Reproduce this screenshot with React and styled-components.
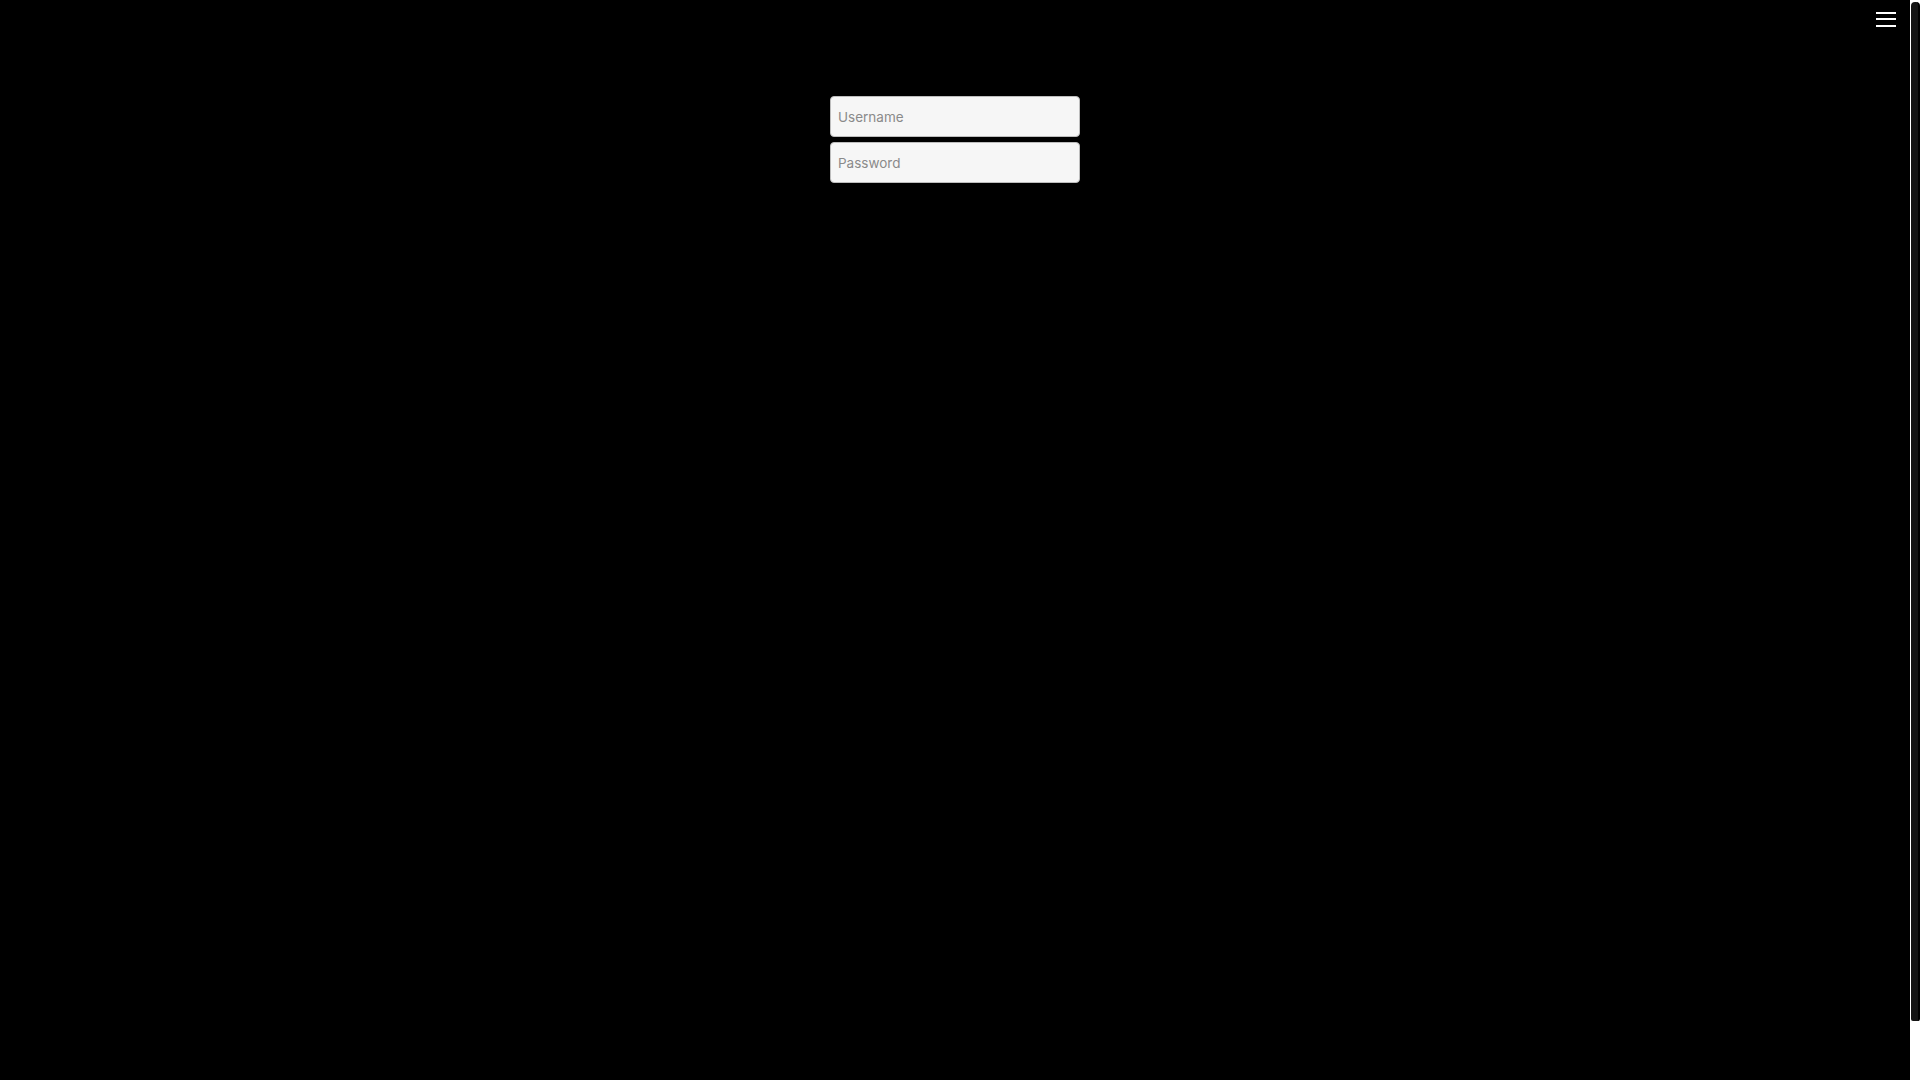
import styled, { createGlobalStyle } from "styled-components"

const Global = createGlobalStyle`
	html, body {
		margin: 0;
		background: #000;
		overflow: hidden;
	}
	body {
		font-family: Inter, "Noto Sans", sans-serif;
	}
`

const Shell = styled.div`
	display: flex;
	height: 100vh;
	background: #000;
`

const Page = styled.main`
	position: relative;
	flex: 1;
	display: flex;
	flex-direction: column;
	align-items: center;
	padding-top: 96px;
	box-sizing: border-box;
`

const Form = styled.form`
	display: flex;
	flex-direction: column;
	gap: 5px;
	width: 250px;
`

const Input = styled.input`
	box-sizing: border-box;
	height: 41px;
	width: 100%;
	padding: 0 7px;
	background: #f6f6f6;
	border: 1px solid #bdbdbd;
	border-radius: 4px;
	font-family: Inter, "Noto Sans", sans-serif;
	font-size: 13.5px;
	color: #333;
	outline: none;

	&::placeholder {
		color: #8a8a8a;
	}
`

const MenuButton = styled.button`
	position: absolute;
	top: 9px;
	right: 12px;
	width: 22px;
	height: 20px;
	padding: 0;
	background: none;
	border: none;
	cursor: pointer;
	display: flex;
	flex-direction: column;
	justify-content: center;
	gap: 4.5px;
`

const Bar = styled.span`
	display: block;
	width: 20px;
	height: 2px;
	background: #fff;
`

// drawn scrollbar, as in the capture
const ScrollTrack = styled.div`
	width: 10px;
	background: #fff;
	padding-top: 2px;
	box-sizing: border-box;
`

const ScrollThumb = styled.div`
	height: 1019px;
	margin-left: 1px;
	background: #141414;
	border-right: 2px solid #000;
	border-radius: 4px 4px 2px 2px;
`

const App = () => {
	return (
		<>
			<Global />
			<Shell>
				<Page>
					<MenuButton aria-label="Menu">
						<Bar />
						<Bar />
						<Bar />
					</MenuButton>
					<Form onSubmit={e => e.preventDefault()}>
						<Input type="text" placeholder="Username" />
						<Input type="password" placeholder="Password" />
					</Form>
				</Page>
				<ScrollTrack>
					<ScrollThumb />
				</ScrollTrack>
			</Shell>
		</>
	)
}

export default App
